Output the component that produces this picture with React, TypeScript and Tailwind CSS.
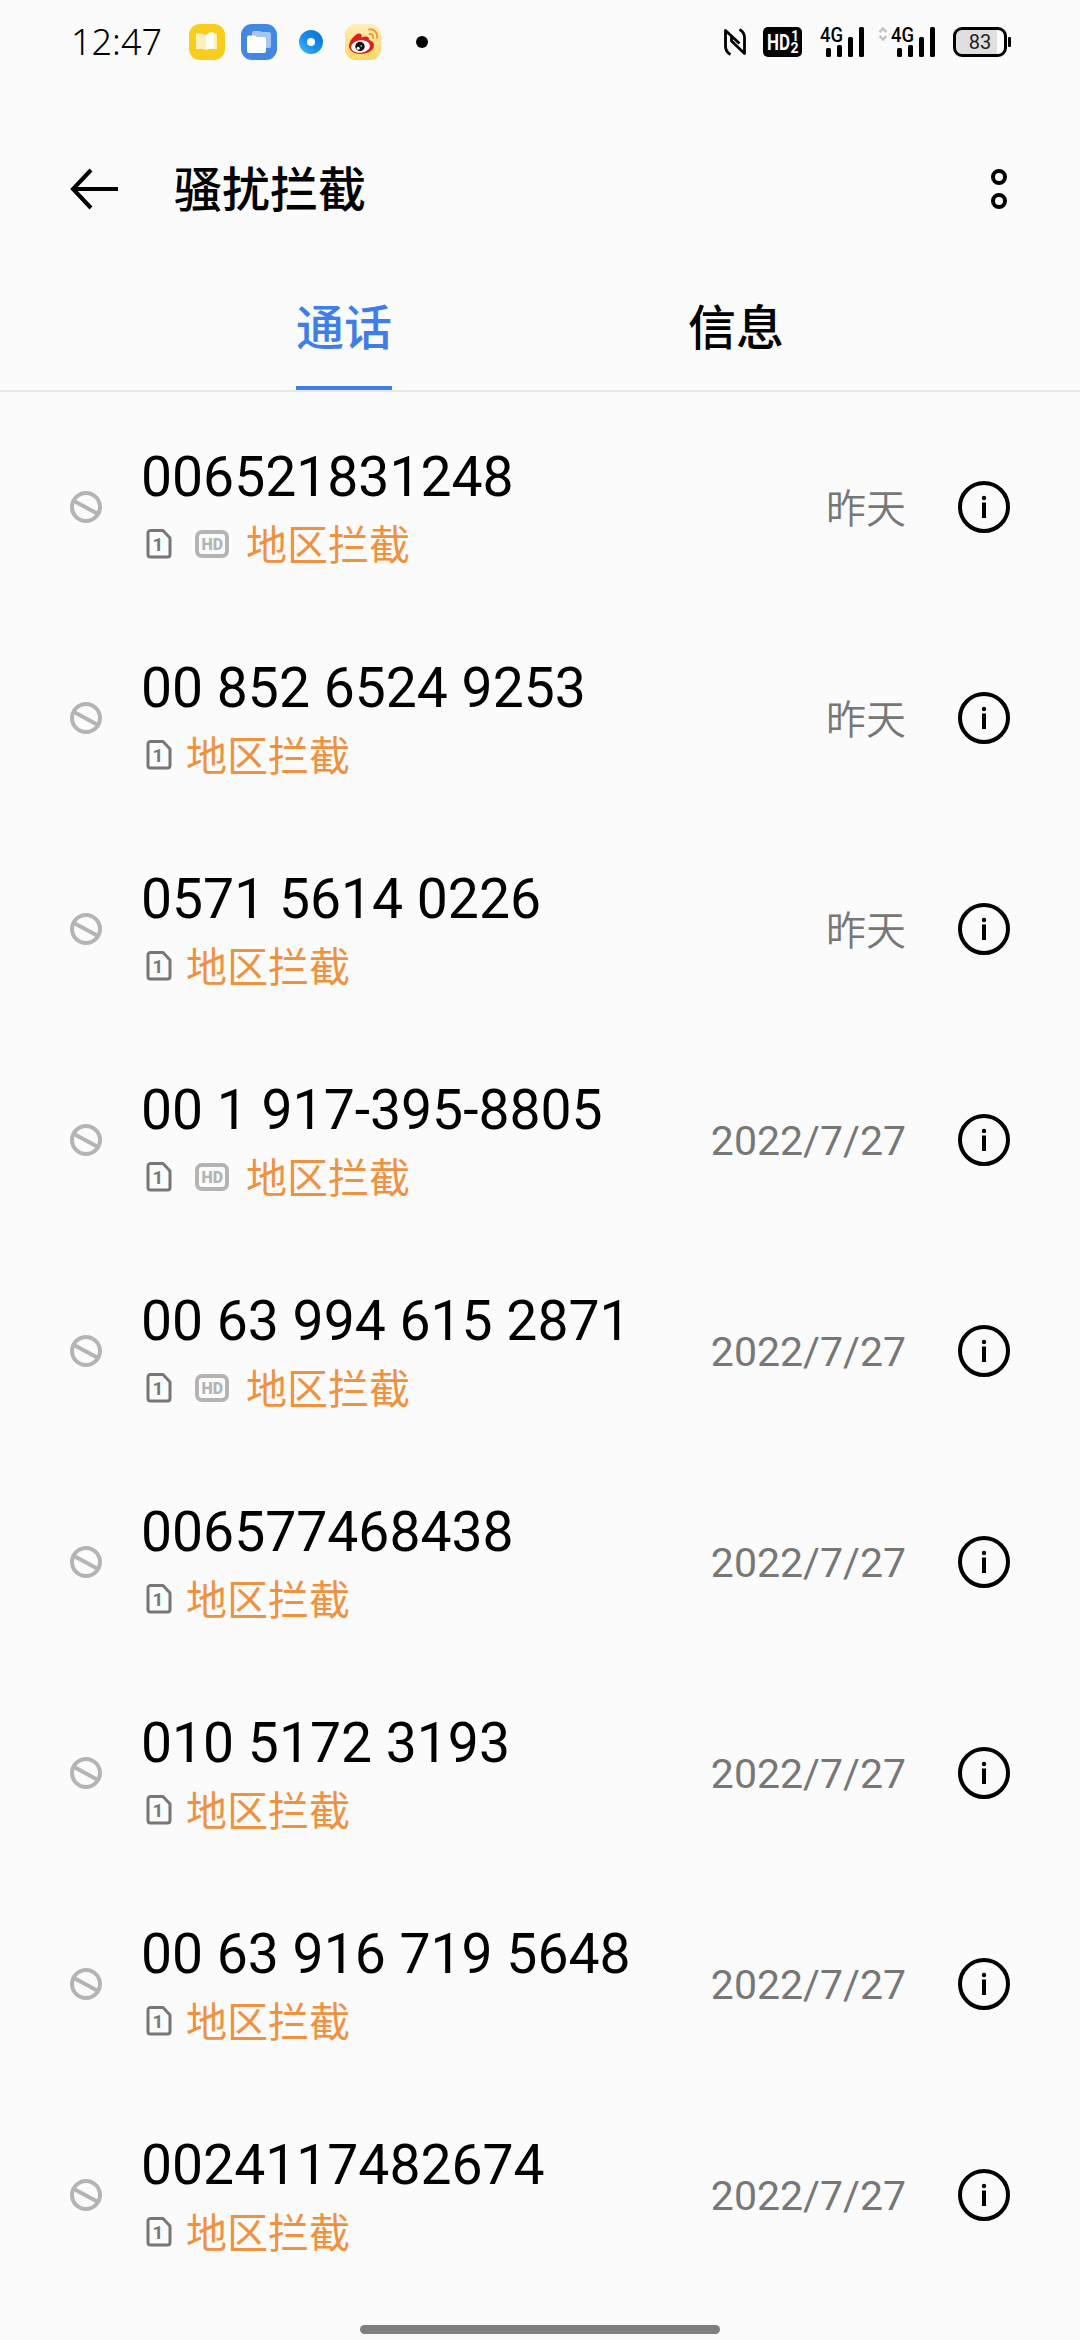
type Call = {
  number: string;
  date: string;
  hd?: boolean;
};

const calls: Call[] = [
  { number: "006521831248", date: "昨天", hd: true },
  { number: "00 852 6524 9253", date: "昨天" },
  { number: "0571 5614 0226", date: "昨天" },
  { number: "00 1 917-395-8805", date: "2022/7/27", hd: true },
  { number: "00 63 994 615 2871", date: "2022/7/27", hd: true },
  { number: "006577468438", date: "2022/7/27" },
  { number: "010 5172 3193", date: "2022/7/27" },
  { number: "00 63 916 719 5648", date: "2022/7/27" },
  { number: "0024117482674", date: "2022/7/27" },
];

function ReaderIcon() {
  return (
    <svg width="36" height="36" viewBox="0 0 36 36">
      <rect width="36" height="36" rx="11" fill="#f9cd1c" />
      <path d="M7 9.500c4 0 7 0 10 1.500v15c-3-1.500-6-1-10-1z" fill="#fdf0bd" />
      <path d="M17 11c3-3 5-3 8-2.500V25c-3 0-6-.5-8 1z" fill="#fff" />
      <path d="M25 9.500h3V25h-3z" fill="#fdf0bd" />
    </svg>
  );
}

function FilesIcon() {
  return (
    <svg width="36" height="36" viewBox="0 0 36 36">
      <rect width="36" height="36" rx="11" fill="#4287e2" />
      <path
        d="M13 7h6l2 1h7a2 2 0 0 1 2 2v12a2 2 0 0 1-2 2H13a2 2 0 0 1-2-2V9a2 2 0 0 1 2-2z"
        fill="#a5c6f3"
      />
      <path
        d="M8 11.500h6l2 1.500h7a2 2 0 0 1 2 2v12a2 2 0 0 1-2 2H8a2 2 0 0 1-2-2V13.500a2 2 0 0 1 2-2z"
        fill="#fff"
      />
    </svg>
  );
}

function BrowserIcon() {
  return (
    <svg width="24" height="24" viewBox="0 0 24 24">
      <defs>
        <linearGradient id="ring" x1="1" y1="0" x2="0" y2="1">
          <stop offset="0" stopColor="#0a7ae0" />
          <stop offset="0.6" stopColor="#1b8ceb" />
          <stop offset="1" stopColor="#35aef5" />
        </linearGradient>
      </defs>
      <circle cx="12" cy="12" r="8" fill="none" stroke="url(#ring)" strokeWidth="8" />
    </svg>
  );
}

function WeiboIcon() {
  return (
    <svg width="36" height="36" viewBox="0 0 36 36">
      <defs>
        <linearGradient id="weibo" x1="0" y1="0" x2="0" y2="1">
          <stop offset="0" stopColor="#fdeebd" />
          <stop offset="1" stopColor="#fdd75f" />
        </linearGradient>
      </defs>
      <rect width="36" height="36" rx="11" fill="url(#weibo)" />
      <path
        d="M4 22c0-5 6-12.500 10.500-12.500 2 0 2.500 2 2 4 3-1.500 8-2 7.500 2.500 3 1 5 2.500 5 5.500 0 4.500-6 8.500-13 8.500S4 26.500 4 22z"
        fill="#dc1f1f"
      />
      <ellipse cx="15.500" cy="22.500" rx="9.500" ry="6.200" fill="#fff" transform="rotate(-8 15.500 22.500)" />
      <circle cx="15" cy="22.500" r="4.700" fill="#111" />
      <circle cx="13.200" cy="24.200" r="1.500" fill="#fff" />
      <circle cx="16.200" cy="22" r="0.800" fill="#fff" />
      <path
        d="M24 5.500c5 -1 9 3.500 8 8.500M24.500 10c2.500-.3 4 1.600 3.600 4"
        fill="none"
        stroke="#e9a03c"
        strokeWidth="2"
        strokeLinecap="round"
      />
    </svg>
  );
}

function NfcIcon() {
  return (
    <svg width="22" height="28" viewBox="0 0 22 28" fill="none" stroke="#000" strokeWidth="2.800">
      <path d="M6.500 26.500C2.500 24.500 1.500 22 1.500 18V2.500L15.500 15.500" strokeLinejoin="round" />
      <path d="M15.500 1.500c4 2 5 4.500 5 8.500v15.500L7.500 13V9" strokeLinejoin="round" />
    </svg>
  );
}

function VolteIcon() {
  return (
    <svg width="39" height="30" viewBox="0 0 39 30" className="font-['Roboto',sans-serif]">
      <rect width="39" height="30" rx="5" fill="#000" />
      <g fill="#fff" fontWeight="700">
        <text x="4" y="23" fontSize="22" textLength="23" lengthAdjust="spacingAndGlyphs">
          HD
        </text>
        <text x="28" y="14" fontSize="14">
          1
        </text>
        <text x="27.500" y="25.500" fontSize="14">
          2
        </text>
      </g>
    </svg>
  );
}

function SignalIcon() {
  return (
    <svg width="44" height="30" viewBox="0 0 44 30" className="overflow-visible font-['Roboto',sans-serif]">
      <text x="0" y="15" fontSize="20" fontWeight="500" textLength="23" lengthAdjust="spacingAndGlyphs">
        4G
      </text>
      <rect x="6" y="21" width="5" height="9" rx="1.500" />
      <rect x="17" y="18" width="5" height="12" rx="1.500" />
      <rect x="28" y="10" width="5" height="20" rx="1.500" />
      <rect x="39" y="0" width="5" height="30" rx="1.500" />
    </svg>
  );
}

function BatteryIcon() {
  return (
    <svg width="58" height="30" viewBox="0 0 58 30" className="font-['Roboto',sans-serif]">
      <path d="M10 3h34v24H10a7 7 0 0 1-7-7V10a7 7 0 0 1 7-7z" fill="#dfdfdf" />
      <rect x="1.500" y="1.500" width="51" height="27" rx="7.500" fill="none" stroke="#000" strokeWidth="3" />
      <rect x="55" y="10" width="3" height="10" rx="1" />
      <text x="27" y="22" fontSize="20" textAnchor="middle" fill="#222">
        83
      </text>
    </svg>
  );
}

function BlockedIcon() {
  return (
    <svg width="32" height="32" viewBox="0 0 32 32" fill="none" stroke="#b4b4b4" strokeWidth="4">
      <circle cx="16" cy="16" r="14" />
      <path d="M4 10l24 13" />
    </svg>
  );
}

function SimIcon() {
  return (
    <svg width="26" height="30" viewBox="0 0 26 30" className="font-['Roboto',sans-serif]">
      <path
        d="M4.500 1.500H17L24 9v16.500a2.500 2.500 0 0 1-2.500 2.500h-17A2.500 2.500 0 0 1 2 25.500V4a2.500 2.500 0 0 1 2.500-2.500z"
        fill="none"
        stroke="#777"
        strokeWidth="3"
        strokeLinejoin="round"
      />
      <text x="12" y="22" fontSize="19" fontWeight="700" textAnchor="middle" fill="#777">
        1
      </text>
    </svg>
  );
}

function HdIcon() {
  return (
    <svg width="34" height="28" viewBox="0 0 34 28" className="font-['Roboto',sans-serif]">
      <rect x="2" y="2" width="30" height="24" rx="5" fill="none" stroke="#b4b4b4" strokeWidth="4" />
      <text
        x="6.500"
        y="20"
        fontSize="17"
        fontWeight="900"
        fill="#b4b4b4"
        textLength="21.500"
        lengthAdjust="spacingAndGlyphs"
      >
        HD
      </text>
    </svg>
  );
}

function InfoIcon() {
  return (
    <svg width="52" height="52" viewBox="0 0 52 52">
      <circle cx="26" cy="26" r="24" fill="none" stroke="#000" strokeWidth="4" />
      <circle cx="26" cy="17" r="2.200" />
      <rect x="24" y="21.500" width="4" height="15.500" />
    </svg>
  );
}

function StatusBar() {
  return (
    <div className="flex h-[84px] items-center pr-[69px] pl-[71px]">
      <div className="w-[118px] font-['Noto_Sans',sans-serif] text-[36px] leading-none font-[360]">12:47</div>
      <div className="flex items-center">
        <ReaderIcon />
        <div className="ml-4 flex">
          <FilesIcon />
        </div>
        <div className="ml-[22px] flex">
          <BrowserIcon />
        </div>
        <div className="ml-[22px] flex">
          <WeiboIcon />
        </div>
        <div className="ml-[35px] size-3 rounded-full bg-black" />
      </div>
      <div className="ml-auto flex items-center">
        <NfcIcon />
        <div className="ml-[17px] flex">
          <VolteIcon />
        </div>
        <div className="ml-[18px] flex">
          <SignalIcon />
        </div>
        <svg width="8" height="14" viewBox="0 0 8 14" className="mb-4 ml-[15px]" fill="none" stroke="#c4c4c4" strokeWidth="2.500">
          <path d="M.5 5L4 1.500 7.500 5M.5 9L4 12.500 7.500 9" />
        </svg>
        <div className="ml-1 flex">
          <SignalIcon />
        </div>
        <div className="ml-[18px] flex">
          <BatteryIcon />
        </div>
      </div>
    </div>
  );
}

function CallRow({ call }: { call: Call }) {
  return (
    <li className="flex h-[211px] items-center pr-[70px] pl-[70px]">
      <BlockedIcon />
      <div className="ml-[39px] flex flex-col pt-2">
        <div className="text-[55.25px] leading-[64px]">{call.number}</div>
        <div className="mt-1 flex h-16 items-center">
          <div className="ml-[5px] flex pb-0.5">
            <SimIcon />
          </div>
          {call.hd && (
            <div className="ml-[23px] flex pb-0.5">
              <HdIcon />
            </div>
          )}
          <span className={`pt-[3px] text-[41px] leading-none text-[#f0913f] ${call.hd ? "ml-[17px]" : "ml-[14px]"}`}>
            地区拦截
          </span>
        </div>
      </div>
      <div
        className={`mr-[52px] ml-auto leading-none text-[#777] ${
          call.date === "昨天" ? "pt-1.5 text-[40px] font-[350]" : "pt-[3px] text-[41px]"
        }`}
      >
        {call.date}
      </div>
      <InfoIcon />
    </li>
  );
}

export default function App() {
  return (
    <main className="flex h-[2340px] w-[1080px] flex-col bg-[#fbfbfb] font-['Roboto','Noto_Sans_CJK_SC',sans-serif] text-black">
      <StatusBar />
      <header className="flex h-[210px] items-center pr-[73px] pl-[70px]">
        <svg width="48" height="42" viewBox="0 0 48 42" fill="none" stroke="#000" strokeWidth="4">
          <path d="M48 21H3M21 2L3 21l18 19" />
        </svg>
        <h1 className="ml-14 pt-1 text-[48px] leading-none font-medium">骚扰拦截</h1>
        <svg width="16" height="40" viewBox="0 0 16 40" className="ml-auto" fill="none" stroke="#000" strokeWidth="4">
          <circle cx="8" cy="8" r="6" />
          <circle cx="8" cy="32" r="6" />
        </svg>
      </header>
      <nav className="flex h-[98px] justify-center gap-[296px] border-b-2 border-[#e9e9e9] text-[48px] font-medium">
        <button className="border-b-4 border-[#3f7de8] pb-[22px] leading-none text-[#3f7de8]">通话</button>
        <button className="border-b-4 border-transparent pb-[22px] leading-none">信息</button>
      </nav>
      <ul className="pt-[9.5px]">
        {calls.map((call) => (
          <CallRow key={call.number} call={call} />
        ))}
      </ul>
      <div className="mx-auto mt-[24.5px] h-[9px] w-[360px] rounded-full bg-[#7f7f7f]" />
    </main>
  );
}
